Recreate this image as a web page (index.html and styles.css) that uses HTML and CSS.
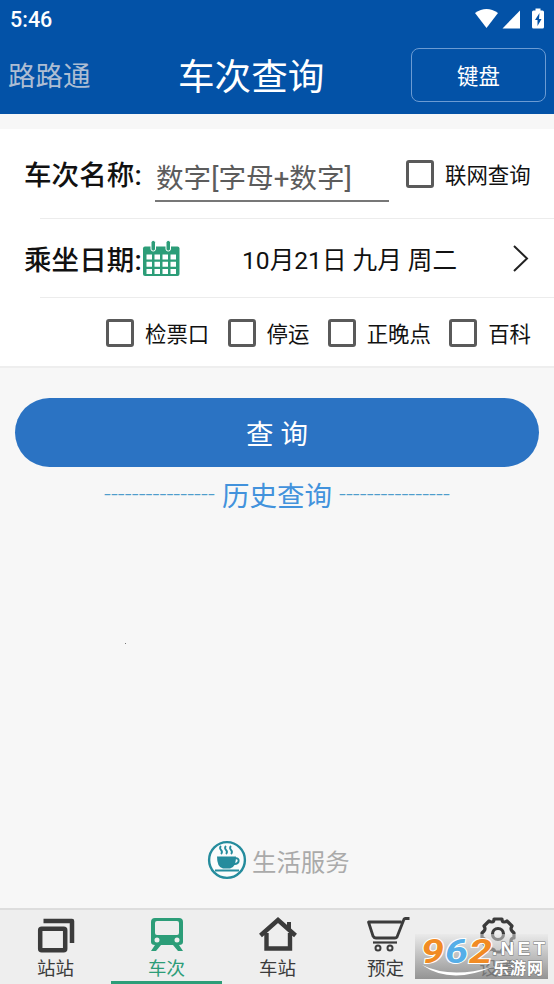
FILE: index.html
```html
<!DOCTYPE html>
<html lang="zh-CN">
<head>
<meta charset="utf-8">
<title>车次查询</title>
<link rel="stylesheet" href="styles.css">
</head>
<body>
<div class="app">
  <header class="top">
    <div class="status">
      <span class="clock">5:46</span>
      <svg class="status-icons" width="72" height="22" viewBox="0 0 72 22" fill="#fff">
        <path d="M1 5Q12.500-3 24 5L12.500 20Z"/>
        <path d="M46 2.500V20.500H28.500Z"/>
        <path fill-rule="evenodd" d="M61.500 0.500h5v2h2q1.500 0 1.500 1.500v15q0 1.500-1.500 1.500h-9q-1.500 0-1.500-1.500V4q0-1.500 1.500-1.500h2zM65.500 5l-4.500 7h2.500v6l4-7h-2.500z"/>
      </svg>
    </div>
    <div class="nav">
      <span class="brand">路路通</span>
      <h1 class="title">车次查询</h1>
      <button class="keyboard">键盘</button>
    </div>
  </header>

  <main class="content">
    <section class="card">
      <div class="row row-name">
        <span class="label">车次名称:</span>
        <div class="input">数字[字母+数字]</div>
        <div class="check"><i class="box"></i><span>联网查询</span></div>
      </div>
      <div class="row row-date">
        <span class="label">乘坐日期:</span>
        <svg class="calendar" width="38" height="37" viewBox="0 0 38 37">
          <rect x="1" y="6.500" width="36.500" height="29.500" rx="2" fill="#2c9d78"/>
          <g fill="#2c9d78" stroke="#fff" stroke-width="1"><rect x="9" y="0.500" width="4.500" height="10.500" rx="2"/><rect x="24" y="0.500" width="4.500" height="10.500" rx="2"/></g>
          <g stroke="#fff" stroke-width="5" stroke-dasharray="5.500 2.500" fill="none"><path d="M4.500 17h30M4.500 24.200h30M4.500 31.400h30"/></g>
        </svg>
        <span class="date">10月21日 九月 周二</span>
        <svg class="arrow" width="18" height="28" viewBox="0 0 18 28"><path d="M2 1L15 13.500L2 26" fill="none" stroke="#222" stroke-width="2"/></svg>
      </div>
      <div class="row row-options">
        <div class="check"><i class="box"></i><span>检票口</span></div>
        <div class="check"><i class="box"></i><span>停运</span></div>
        <div class="check"><i class="box"></i><span>正晚点</span></div>
        <div class="check"><i class="box"></i><span>百科</span></div>
      </div>
    </section>
    <button class="search">查 询</button>
    <div class="history"><span class="dashes">----------------</span><span>历史查询</span><span class="dashes">----------------</span></div>
    <i class="speck"></i>
    <div class="life">
      <svg width="40" height="40" viewBox="0 0 40 40">
        <circle cx="20" cy="20" r="17.900" fill="#fafcfc" stroke="#258c9d" stroke-width="2.400"/>
        <path d="M10 16.500h19q0 11-6 12h-7q-6-1-6-12z" fill="#258c9d"/>
        <path d="M28 18.500c5-1.500 5 6-1 5.500M8 30.500h24" fill="none" stroke="#258c9d" stroke-width="2"/>
        <path d="M14 6q-2 2 0 4t0 4M19 6q-2 2 0 4t0 4M24 6q-2 2 0 4t0 4" fill="none" stroke="#258c9d" stroke-width="1.800"/>
      </svg>
      <span>生活服务</span>
    </div>
  </main>

  <nav class="tabs">
    <a class="tab">
      <svg width="40" height="38" viewBox="0 0 40 38" fill="none" stroke="#3b3b3b"><path d="M7.500 4h28.500V26" stroke-width="4.500" stroke-linejoin="round"/><rect x="4.200" y="11.700" width="25" height="21.500" rx="1.500" stroke-width="4.500"/></svg>
      <span>站站</span>
    </a>
    <a class="tab active">
      <svg width="40" height="38" viewBox="0 0 40 38"><path fill="#2c9d78" fill-rule="evenodd" d="M8 1h24q4 0 4 4v20q0 3-4 3l4 6h-5l-5-6H14l-5 6H4l4-6q-4 0-4-3V5q0-4 4-4zM10 4q-2 0-2 2v10q0 2 2 2h20q2 0 2-2V6q0-2-2-2zM10 20.500a2.500 2.500 0 100 5a2.500 2.500 0 100-5M30 20.500a2.500 2.500 0 100 5a2.500 2.500 0 100-5"/></svg>
      <span>车次</span>
    </a>
    <a class="tab">
      <svg width="40" height="38" viewBox="0 0 40 38"><path d="M2.500 18.500L20 3L37.500 18.500M8.500 16v15.500h23.500V16" fill="none" stroke="#3b3b3b" stroke-width="4.400"/><path d="M29 5h4v9l-4-4z" fill="#3b3b3b"/></svg>
      <span>车站</span>
    </a>
    <a class="tab">
      <svg class="cart" width="46" height="38" viewBox="0 0 46 38" fill="none" stroke="#3b3b3b"><path d="M43.500 1.500h-4q-1.500 0-2 2L31 20q-.5 1-2 1H10Q8 21 7 19L2.500 5h33" stroke-width="2.800" stroke-linejoin="round"/><path d="M7 25.500h24" stroke-width="2.200"/><circle cx="12" cy="31" r="2.500" stroke-width="2"/><circle cx="24" cy="31" r="2.500" stroke-width="2"/></svg>
      <span>预定</span>
    </a>
    <a class="tab">
      <svg width="40" height="38" viewBox="0 0 40 38" fill="none" stroke="#3b3b3b" stroke-width="3.200" stroke-linejoin="round"><path d="M14 5q2 0 2-3h8q0 3 2 3t3-1l5 5q-2 3 0 5t2 2v5q-3 0-3 3t1 3l-5 6q-3-2-5 0l-1 2h-6l-1-2q-2-2-5 0l-5-6q1 0 1-3t-3-3v-5q0 0 2-2t0-5l5-5q1 1 3 1z"/><circle cx="20" cy="17" r="5.500"/></svg>
      <span>设置</span>
    </a>
    <div class="watermark">
      <svg width="133" height="45" viewBox="0 0 133 45">
        <g class="mark-num"><text x="6" y="29" textLength="23" lengthAdjust="spacingAndGlyphs" fill="#f18b24">9</text><text x="30" y="29" textLength="23" lengthAdjust="spacingAndGlyphs" fill="#55aee8">6</text><text x="54" y="29" textLength="23" lengthAdjust="spacingAndGlyphs" fill="#f18b24">2</text></g>
        <path d="M7 31Q36 51 77 33Q36 45 7 31Z" fill="#fff"/>
        <text class="mark-net" x="77" y="21" textLength="53" lengthAdjust="spacing">.NET</text>
        <text class="mark-cn" x="78" y="40" textLength="50" lengthAdjust="spacing">乐游网</text>
      </svg>
    </div>
  </nav>
</div>
</body>
</html>
```
FILE: styles.css
```css
* { box-sizing: border-box; }
body { margin: 0; font-family: Roboto, "Noto Sans CJK SC", sans-serif; color: #111; background: #f7f7f7; }
.app { height: 984px; display: flex; flex-direction: column; overflow: hidden; }
button { font-family: inherit; padding: 0; }
svg { display: block; flex: none; }
span { white-space: nowrap; }

.top { height: 114px; background: #0352a7; color: #fff; }
.status { height: 38px; padding: 8px 10px 0; display: flex; justify-content: space-between; }
.clock { font-size: 21.500px; font-weight: 500; line-height: 24px; }
.status-icons { margin-right: -2px; }
.nav { display: grid; grid-template-columns: 170px 1fr 135px; padding: 10px 8px 0; line-height: 54px; }
.brand { padding-top: 2px; font-size: 27.500px; color: #adbdd3; }
.title { margin: 0; padding-top: 3px; font-size: 36.600px; font-weight: 400; }
.keyboard { height: 54px; border: 1.500px solid #6b9bd3; border-radius: 8px; background: none; color: #fff; font-size: 21.400px; padding-bottom: 2px; }

.content { flex: 1; display: flex; flex-direction: column; padding-top: 15px; }
.card { background: #fff; height: 239px; border-bottom: 2px solid #eee; }
.row { display: flex; align-items: center; }
.row-name { height: 90px; padding-left: 24px; background: linear-gradient(#ececec, #ececec) 40px 100% / 100% 1px no-repeat; }
.row-date { height: 79px; padding-left: 24px; background: linear-gradient(#ececec, #ececec) 40px 100% / 100% 1px no-repeat; }
.row-options { height: 69px; padding: 0 23px 0 106px; justify-content: space-between; }
.label { width: 118px; padding-bottom: 2px; font-size: 27.500px; font-weight: 500; letter-spacing: .1px; }
.input { width: 234px; height: 46px; margin: 10px 17px 0 13px; padding-left: 1px; line-height: 46px; font-size: 27.600px; color: #5c5c5c; border-bottom: 2px solid #777; white-space: nowrap; }
.check { display: flex; align-items: center; font-size: 21.400px; gap: 11px; }
.row-name .check span { padding-bottom: 2px; }
.box { width: 28px; height: 28px; border: 3px solid #5a5a5a; border-radius: 3px; }
.date { margin-left: 62px; padding-bottom: 2px; width: 270px; font-size: 24.600px; }
.search { height: 69px; margin: 30px 15px 0; padding-bottom: 2px; border: 0; border-radius: 35px; background: #2b73c3; color: #fff; font-size: 27.500px; }
.history { height: 54px; display: flex; justify-content: center; align-items: center; gap: 7px; font-size: 27.500px; color: #4292dc; }
.dashes { font-size: 24.200px; font-weight: 300; color: #4f9dcc; width: 111px; }
.speck { width: 1px; height: 1px; margin: 122px 0 0 125px; background: #777; }
.life { margin: 196px 0 0 207px; display: flex; align-items: center; gap: 5px; font-size: 24.400px; color: #aaa; }

.tabs { position: relative; height: 76px; display: grid; grid-template-columns: repeat(5, 111px); grid-template-rows: 74px; background: #eee; border-top: 2px solid #ddd; color: #3b3b3b; }
.tab { display: flex; flex-direction: column; align-items: center; padding-top: 7px; font-size: 18.500px; line-height: 23px; }
.tab.active { color: #2c9d78; border-bottom: 3px solid #2c9d78; }
.tab span { margin-top: 3px; }
.tab:nth-child(4) span { transform: translateX(-3px); }
.tab:nth-child(5) { padding-right: 3px; }
.watermark { position: absolute; left: 415px; top: 24px; width: 133px; height: 45px; background: linear-gradient(rgba(230,230,230,.5), rgba(125,125,125,.8)); }
.mark-num { font: italic 700 34px Roboto, sans-serif; stroke: #fff; stroke-width: 2px; paint-order: stroke; }
.mark-net { font: 700 19px "Liberation Sans", sans-serif; fill: #fff; stroke: #777; stroke-width: 1px; paint-order: stroke; }
.mark-cn { font: 700 16px "Noto Sans CJK SC", sans-serif; fill: #fff; stroke: #777; stroke-width: 1px; paint-order: stroke; }
```
